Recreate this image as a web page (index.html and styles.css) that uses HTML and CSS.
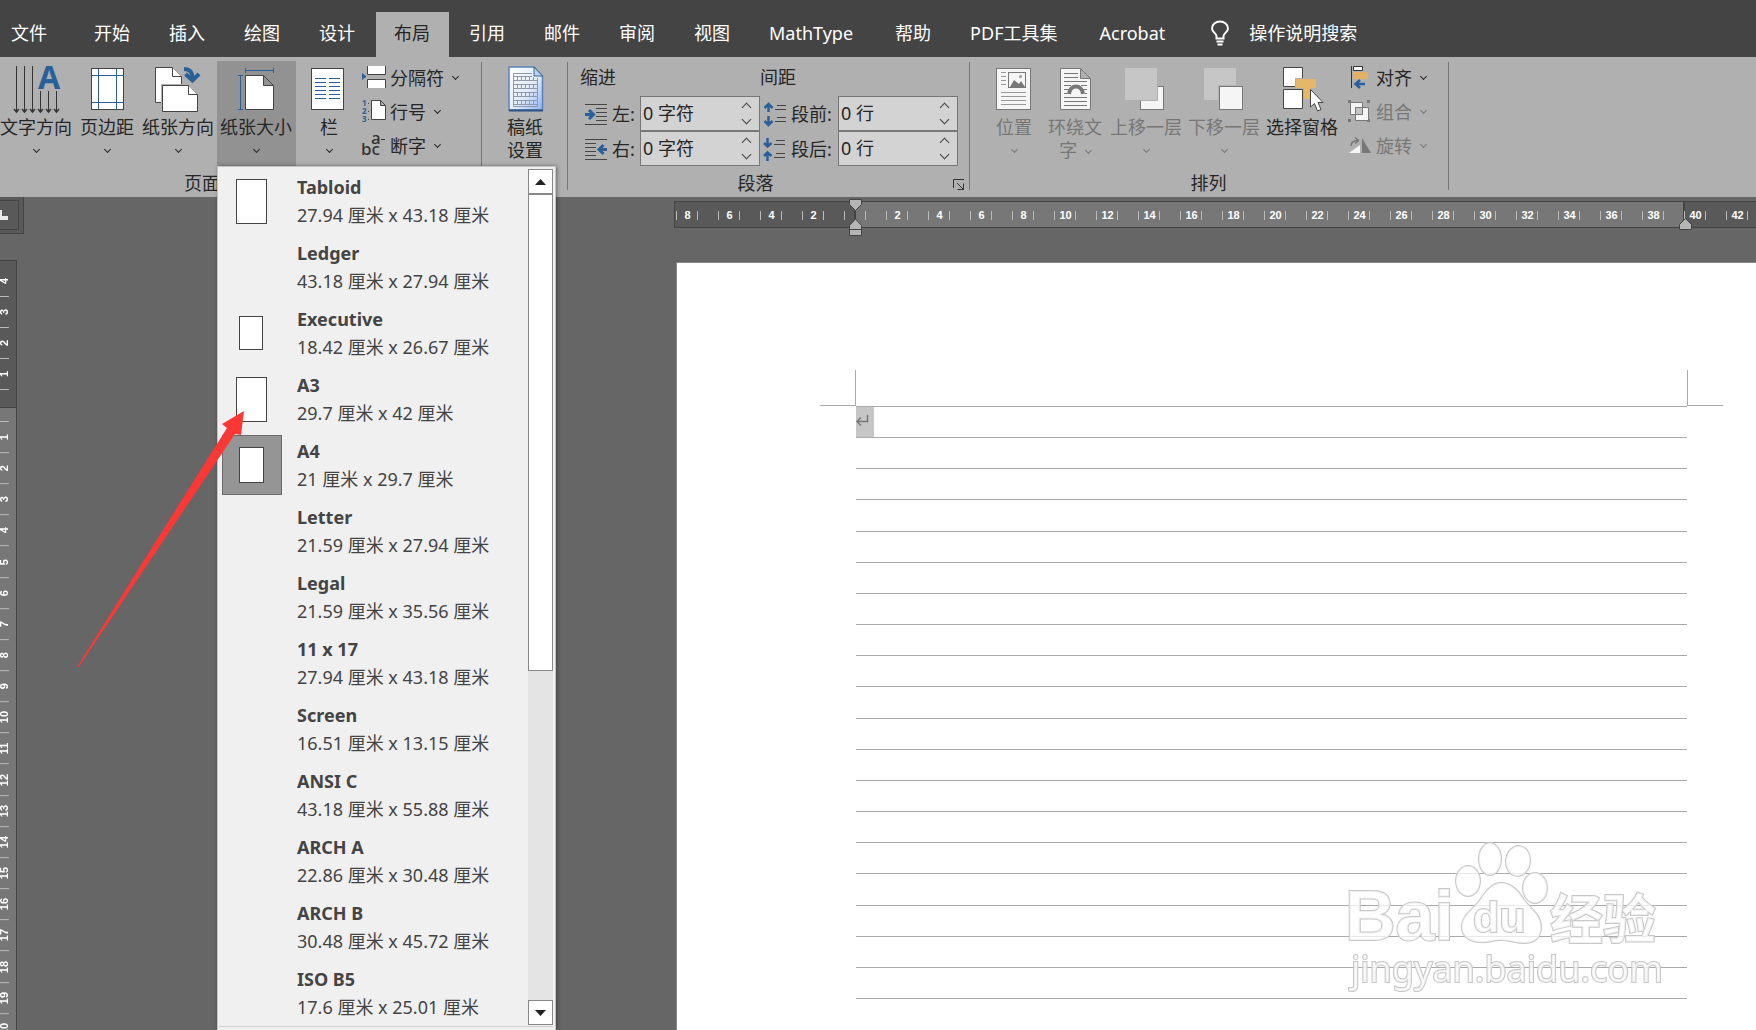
FILE: index.html
```html
<!DOCTYPE html>
<html lang="zh-CN">
<head>
<meta charset="utf-8">
<title>布局</title>
<link rel="stylesheet" href="styles.css">
</head>
<body>
<div class="app">
  <nav class="tabs">
    <button class="tab">文件</button>
    <button class="tab">开始</button>
    <button class="tab">插入</button>
    <button class="tab">绘图</button>
    <button class="tab">设计</button>
    <button class="tab active">布局</button>
    <button class="tab">引用</button>
    <button class="tab">邮件</button>
    <button class="tab">审阅</button>
    <button class="tab">视图</button>
    <button class="tab latin">MathType</button>
    <button class="tab">帮助</button>
    <button class="tab latin">PDF工具集</button>
    <button class="tab latin">Acrobat</button>
    <button class="tab tell">
      <svg width="20" height="26" viewBox="0 0 20 26" fill="none" stroke="#fff" stroke-width="2"><path d="M6.500 18.500V16C6.500 13.500 2 12 2 8.500C2 4.500 5.500 1.500 10 1.500S18 4.500 18 8.500C18 12 13.500 13.500 13.500 16V18.500ZM6.500 21.500H13.500M7.500 24.500H12.500"/></svg>
      <span>操作说明搜索</span>
    </button>
  </nav>

  <div class="ribbon">
    <section class="group setup">
      <div class="tools">
        <button class="big"><svg class="ico" viewBox="0 0 48 48"><g fill="none" stroke="#333"><path d="M4.500 0V46M12.500 0V46M20.500 0V46M28.500 25V46M36.500 25V46M44.500 25V46"/><path stroke-width="1.500" d="M2 43l2.500 3l2.500-3M10 43l2.500 3l2.500-3M18 43l2.500 3l2.500-3M26 43l2.500 3l2.500-3M34 43l2.500 3l2.500-3M42 43l2.500 3l2.500-3"/></g><text class="glyph-a" x="26" y="23">A</text></svg><span>文字方向</span><i class="chev"></i></button>
        <button class="big mid"><svg class="ico" viewBox="0 0 48 48"><rect x="8.500" y="2.500" width="32" height="41" fill="#fff" stroke="#444"/><path stroke="#2a6099" d="M15.500 3V43M33.500 3V43M9 9.500H40M9 36.500H40"/></svg><span>页边距</span><i class="chev"></i></button>
        <button class="big"><svg class="ico" viewBox="0 0 48 48"><g fill="#fff" stroke="#444"><path d="M1.500 1.500H18.500L27.500 10.500V36.500H1.500Z"/><path d="M18.500 1.500V10.500H27.500"/><path stroke="#b0b0b0" stroke-width="3" d="M8.500 19.500H34.500L43.500 28.500V45.500H8.500Z"/><path d="M8.500 19.500H34.500L43.500 28.500V45.500H8.500Z"/><path d="M34.500 19.500V28.500H43.500"/></g><path fill="none" stroke="#2a6099" stroke-width="4" d="M30 3C36 3 38.500 6 38.500 13M31.500 8L38.500 14.500L45 8"/></svg><span>纸张方向</span><i class="chev"></i></button>
        <button class="big pressed"><svg class="ico" viewBox="0 0 48 48"><path fill="#fff" stroke="#444" d="M13.500 9.500H31.500L41.500 19.500V43.500H13.500ZM31.500 9.500V19.500H41.500"/><path stroke="#2a6099" d="M13 4.500H42M13.500 2V7M41.500 2V7M8.500 9V44M6 9.500H11M6 43.500H11"/></svg><span>纸张大小</span><i class="chev"></i></button>
        <button class="big cols"><svg class="ico" viewBox="0 0 48 48"><rect x="6.500" y="2.500" width="32" height="41" fill="#fff" stroke="#444"/><path stroke="#2a6099" d="M10 12.500H21M24 12.500H35M10 16.500H21M24 16.500H35M10 20.500H21M24 20.500H35M10 24.500H21M24 24.500H35M10 28.500H21M24 28.500H35M10 32.500H21M24 32.500H35"/></svg><span>栏</span><i class="chev"></i></button>
        <div class="stack">
          <button class="small"><svg class="sico" viewBox="0 0 24 24"><path fill="#fff" stroke="#444" d="M5.500 0V8.500H23.500V0M5.500 22V13.500H23.500V22"/><path fill="#2a6099" d="M0 7L4.500 10.500L0 14Z"/></svg><span>分隔符</span><i class="chev"></i></button>
          <button class="small"><svg class="sico" viewBox="0 0 24 24"><text class="nums" x="0" y="6">1</text><text class="nums" x="0" y="14">2</text><text class="nums" x="0" y="22">3</text><path stroke="#444" stroke-dasharray="1 7" d="M6.500 3V21"/><path fill="#fff" stroke="#444" d="M9.500 .5H18.500L23.500 5.500V19.500H9.500ZM18.500 .5V5.500H23.500"/></svg><span>行号</span><i class="chev"></i></button>
          <button class="small"><svg class="sico" viewBox="0 0 24 24"><text class="hyph" x="-1" y="21">bc</text><text class="hyph" x="9" y="10">a</text><path stroke="#333" d="M19 5.500H23"/></svg><span>断字</span><i class="chev"></i></button>
        </div>
      </div>
      <footer>页面设置</footer>
    </section>

    <section class="group draft">
      <div class="tools">
        <button class="big"><svg class="ico" viewBox="0 0 48 48"><defs><linearGradient id="paper" x1="0" y1="0" x2="1" y2="1"><stop offset="0" stop-color="#fff"/><stop offset=".55" stop-color="#e3ecfa"/><stop offset="1" stop-color="#8fb4f5"/></linearGradient></defs><path fill="url(#paper)" stroke="#5a83bb" stroke-width="1.500" d="M8 1H33L41.500 10V44H8Z"/><path d="M8 44.500H42" stroke="#2c5284" stroke-width="2"/><path fill="#b9d4f2" stroke="#3e648c" d="M33 1V10H41.500Z"/><g fill="none" stroke="#8e99ad"><path d="M12.500 7.500H31M12.500 7.500V40.500H36.500V12M13 10.500H31M13 14.500H36M13 18.500H36M13 22.500H36M13 26.500H36M13 30.500H36M13 34.500H36M13 38.500H36"/><path stroke-width="3" stroke-dasharray="1 3" d="M16 12.500H36M16 20.500H36M16 28.500H36M16 36.500H36"/></g></svg><span>稿纸<br>设置</span></button>
      </div>
    </section>

    <section class="group para">
      <div class="fields">
        <h3>缩进</h3><h3>间距</h3>
        <div class="field"><svg class="sico" viewBox="0 0 24 24"><path stroke="#444" d="M0 2.500H22M11 6.500H22M11 10.500H22M11 14.500H22M11 18.500H22M0 22.500H22"/><path fill="none" stroke="#2a6099" stroke-width="3" d="M0 12.500H8M4 8L8.500 12.500L4 17"/></svg><label for="il">左:</label><div class="spin"><input id="il" value="0 字符"><button class="up" aria-label="增加"></button><button class="down" aria-label="减少"></button></div></div>
        <div class="field right"><svg class="sico" viewBox="0 0 24 24"><path stroke="#444" d="M13 3.500H22M11 7.500H22M13 15.500H22M11 19.500H22" /><path fill="none" stroke="#2a6099" stroke-width="2.500" d="M4.500 2V10M.5 6L4.500 2L8.500 6M4.500 14V23M.5 19L4.500 23L8.500 19"/></svg><label for="sb">段前:</label><div class="spin"><input id="sb" value="0 行"><button class="up" aria-label="增加"></button><button class="down" aria-label="减少"></button></div></div>
        <div class="field"><svg class="sico" viewBox="0 0 24 24"><path stroke="#444" d="M0 2.500H22M0 6.500H11M0 10.500H11M0 14.500H11M0 18.500H11M0 22.500H22"/><path fill="none" stroke="#2a6099" stroke-width="3" d="M22 12.500H15M18.500 8L14 12.500L18.500 17"/></svg><label for="ir">右:</label><div class="spin"><input id="ir" value="0 字符"><button class="up" aria-label="增加"></button><button class="down" aria-label="减少"></button></div></div>
        <div class="field right"><svg class="sico" viewBox="0 0 24 24"><path stroke="#444" d="M12 3.500H21M10 7.500H21M12 16.500H21M10 20.500H21"/><path fill="none" stroke="#2a6099" stroke-width="2.500" d="M3.500 1V9M0 6L3.500 9.500L7.500 6M3.500 24V16M0 19L3.500 15.500L7.500 19"/></svg><label for="sa">段后:</label><div class="spin"><input id="sa" value="0 行"><button class="up" aria-label="增加"></button><button class="down" aria-label="减少"></button></div></div>
      </div>
      <footer>段落<button class="launch" aria-label="段落设置"><svg width="12" height="12" viewBox="0 0 12 12" fill="none" stroke="#333"><path d="M.5 9V.5H11M4 4L10.500 10.500M10.500 4.500V10.500H4.500"/></svg></button></footer>
    </section>

    <section class="group arrange">
      <div class="tools">
        <button class="big pos" disabled><svg class="ico" viewBox="0 0 48 48"><rect x="6.500" y="2.500" width="34" height="41" fill="#f5f5f5" stroke="#777"/><path stroke="#999" d="M11 6.500H16M11 10.500H16M11 14.500H16M11 18.500H16M11 26.500H36M11 30.500H36M11 34.500H36M11 38.500H36"/><rect x="18.500" y="6.500" width="17" height="15" fill="#f5f5f5" stroke="#777"/><path fill="#777" d="M20 21L24 14L29 18L31 15L35 21Z"/><circle cx="30.500" cy="10.500" r="1.500" fill="#999"/></svg><span>位置</span><i class="chev"></i></button>
        <button class="big mid" disabled><svg class="ico" viewBox="0 0 48 48"><path fill="#f5f5f5" stroke="#777" d="M9.500 2.500H29.500L39.500 12.500V43.500H9.500ZM29.500 2.500V12.500H39.500"/><path stroke="#777" d="M13 7.500H27M13 11.500H27M13 15.500H36M13 19.500H20M30 19.500H36M13 23.500H18M32 23.500H36M13 27.500H16M34 27.500H36M13 31.500H36M13 35.500H36M13 39.500H36"/><path fill="none" stroke="#777" stroke-width="4" d="M18 28C19 18 31 18 32 28"/></svg><span>环绕文<br>字 <i class="chev inline"></i></span></button>
        <button class="big" disabled><svg class="ico" viewBox="0 0 48 48"><rect x="18.500" y="20.500" width="23" height="23" fill="#f5f5f5" stroke="#777"/><path fill="#c6c6c6" stroke="#b0b0b0" d="M2.500 1.500H35.500V34.500H2.500Z"/></svg><span>上移一层</span><i class="chev"></i></button>
        <button class="big spaced" disabled><svg class="ico" viewBox="0 0 48 48"><path fill="#c6c6c6" d="M4 2H36V34H4Z"/><path fill="#b0b0b0" d="M18 19H44V45H18Z"/><rect x="19.500" y="20.500" width="23" height="23" fill="#f5f5f5" stroke="#777"/></svg><span>下移一层</span><i class="chev"></i></button>
        <button class="big spaced"><svg class="ico" viewBox="0 0 48 48"><path fill="#fff" stroke="#444" d="M5.500 1.500H24.500V20.500H5.500ZM5.500 23.500H24.500V42.500H5.500Z"/><path fill="#b0b0b0" d="M17 12H38V22H17Z"/><path fill="#e5b869" d="M18 13H38V22H33V33H26V22H18Z"/><path fill="#fff" stroke="#444" d="M32.500 23.500V41L36.500 37.500L39.500 45L43 43.500L40 36.500H45Z"/></svg><span>选择窗格</span></button>
        <div class="stack">
          <button class="small"><svg class="sico" viewBox="0 0 24 24"><path stroke="#333" d="M3.500 0V22"/><path fill="#fff" stroke="#333" d="M5.500 .5H14.500V4.500H5.500Z"/><path fill="#e3b064" d="M5 6H20V13H5Z"/><path fill="none" stroke="#2a6099" stroke-width="2.500" d="M7 18H17M12 14L7.500 18L12 22"/></svg><span>对齐</span><i class="chev"></i></button>
          <button class="small" disabled><svg class="sico" viewBox="0 0 24 24"><path fill="#777" d="M0 0H3V3H0ZM19 0H22V3H19ZM0 19H3V22H0ZM19 19H22V22H19Z"/><path fill="#f5f5f5" stroke="#777" d="M2.500 2.500H14.500V14.500H2.500ZM7.500 7.500H20.500V20.500H7.500Z"/><path fill="#c6c6c6" stroke="#777" d="M7.500 7.500H14.500V14.500H7.500Z"/></svg><span>组合</span><i class="chev"></i></button>
          <button class="small" disabled><svg class="sico" viewBox="0 0 24 24"><path fill="#f5f5f5" d="M1 19L12 11V19Z"/><path fill="#777" d="M14 4V19H23Z"/><path fill="none" stroke="#777" stroke-width="1.500" d="M3 12C3 8 6 6.500 10 6.500M7 3.500L10.500 6.500L7 9.500"/></svg><span>旋转</span><i class="chev"></i></button>
        </div>
      </div>
      <footer>排列</footer>
    </section>
  </div>

  <main class="workspace">
    <div class="side">
      <button class="corner" aria-label="制表符"><span><svg width="9" height="11" viewBox="0 0 9 11"><path fill="#e6e6e6" d="M0 0H2V6H8V10H0Z"/></svg></span></button>
      <div class="vruler">
        <ol class="vneg"><li>4</li><li>3</li><li>2</li><li>1</li></ol>
        <div class="vzero"></div>
        <ol class="vpos"><li>1</li><li>2</li><li>3</li><li>4</li><li>5</li><li>6</li><li>7</li><li>8</li><li>9</li><li>10</li><li>11</li><li>12</li><li>13</li><li>14</li><li>15</li><li>16</li><li>17</li><li>18</li><li>19</li><li>20</li></ol>
      </div>
    </div>
    <div class="document">
      <div class="hruler">
        <ol><li>8</li><li>6</li><li>4</li><li>2</li><li></li><li>2</li><li>4</li><li>6</li><li>8</li><li>10</li><li>12</li><li>14</li><li>16</li><li>18</li><li>20</li><li>22</li><li>24</li><li>26</li><li>28</li><li>30</li><li>32</li><li>34</li><li>36</li><li>38</li><li>40</li><li>42</li></ol>
        <svg class="mark first" width="14" height="38" viewBox="0 0 14 38"><path fill="#b5b5b5" stroke="#444" d="M.5 .5H12.500V5.500L6.500 11.500L.5 5.500ZM.5 26.500L6.500 20L12.500 26.500V36.500H.5ZM.5 30.500H12.500"/><path stroke="#444" stroke-width="2" d="M6 12V20"/></svg>
        <svg class="mark last" width="14" height="13" viewBox="0 0 14 13"><path fill="#b5b5b5" stroke="#444" d="M.5 6.500L6.500 .5L12.500 6.500V11.500H.5Z"/></svg>
      </div>
      <article class="page">
        <div class="crops"><i class="crop-l"></i><i class="crop-r"></i></div>
        <div class="lines">
          <p><svg width="18" height="30" viewBox="0 0 18 30" fill="none" stroke="#777" stroke-width="1.500"><path d="M11.500 8V14.500H1.500M5 10.500L1 14.500L5 18.500"/></svg></p>
          <p></p><p></p><p></p><p></p><p></p><p></p><p></p><p></p><p></p><p></p><p></p><p></p><p></p><p></p><p></p><p></p><p></p><p></p>
        </div>
      </article>
    </div>
  </main>

  <div class="menu">
    <div class="scroller">
      <ul>
        <li><span class="thumb"><i class="sheet large"></i></span><button><b>Tabloid</b><span>27.94 厘米 x 43.18 厘米</span></button></li>
        <li><span class="thumb"></span><button><b>Ledger</b><span>43.18 厘米 x 27.94 厘米</span></button></li>
        <li><span class="thumb"><i class="sheet exec"></i></span><button><b>Executive</b><span>18.42 厘米 x 26.67 厘米</span></button></li>
        <li><span class="thumb"><i class="sheet large"></i></span><button><b>A3</b><span>29.7 厘米 x 42 厘米</span></button></li>
        <li><span class="thumb selected"><i class="sheet a4"></i></span><button><b>A4</b><span>21 厘米 x 29.7 厘米</span></button></li>
        <li><span class="thumb"></span><button><b>Letter</b><span>21.59 厘米 x 27.94 厘米</span></button></li>
        <li><span class="thumb"></span><button><b>Legal</b><span>21.59 厘米 x 35.56 厘米</span></button></li>
        <li><span class="thumb"></span><button><b>11 x 17</b><span>27.94 厘米 x 43.18 厘米</span></button></li>
        <li><span class="thumb"></span><button><b>Screen</b><span>16.51 厘米 x 13.15 厘米</span></button></li>
        <li><span class="thumb"></span><button><b>ANSI C</b><span>43.18 厘米 x 55.88 厘米</span></button></li>
        <li><span class="thumb"></span><button><b>ARCH A</b><span>22.86 厘米 x 30.48 厘米</span></button></li>
        <li><span class="thumb"></span><button><b>ARCH B</b><span>30.48 厘米 x 45.72 厘米</span></button></li>
        <li><span class="thumb"></span><button><b>ISO B5</b><span>17.6 厘米 x 25.01 厘米</span></button></li>
      </ul>
      <div class="bar">
        <button aria-label="向上"><svg width="11" height="6" viewBox="0 0 11 6"><path fill="#222" d="M0 6L5.500 0L11 6Z"/></svg></button>
        <div class="grip"></div>
        <div class="track"></div>
        <button aria-label="向下"><svg width="11" height="6" viewBox="0 0 11 6"><path fill="#222" d="M0 0L5.500 6L11 0Z"/></svg></button>
      </div>
    </div>
  </div>

  <svg class="arrow" width="170" height="260" viewBox="0 0 170 260"><path fill="#fc3836" d="M169 1L147 14L152 18L3 255.500L3 257L4 256.500L160 24L166 25Z"/></svg>

  <svg class="watermark" width="330" height="160" viewBox="0 0 330 160">
    <defs><filter id="soft" x="-5%" y="-5%" width="110%" height="110%"><feGaussianBlur stdDeviation="0.7"/></filter></defs>
    <g class="wm-halo" filter="url(#soft)">
      <text class="wm-bai" x="5" y="100">Bai</text>
      <text class="wm-cn" x="210" y="99">经验</text>
      <text class="wm-url" x="11" y="142">jingyan.baidu.com</text>
      <ellipse cx="128" cy="41" rx="12" ry="15"/><ellipse cx="150" cy="19" rx="11" ry="16"/><ellipse cx="178" cy="21" rx="12" ry="15" transform="rotate(8 178 21)"/><ellipse cx="195" cy="48" rx="12" ry="15"/>
      <path d="M161 43C172 43 178 51 184 60C191 69 201 75 201 87C201 98 194 103 184 103C175 103 170 100 161 100C152 100 148 103 139 102C127 101 121 94 122 85C123 74 134 69 140 60C146 51 152 43 161 43Z"/>
      <text class="wm-du" x="133" y="92">du</text>
    </g>
  </svg>
</div>
</body>
</html>
```
FILE: styles.css
```css
* { box-sizing: border-box; }
body { margin: 0; }
body, button, input {
  font-family: "Noto Sans", "Noto Sans CJK SC", sans-serif;
  font-size: 18px;
  color: #262626;
}
button { border: 0; padding: 0; background: none; }
ol, ul { list-style: none; margin: 0; padding: 0; }
svg { display: block; flex: none; overflow: visible; }
.app {
  position: relative;
  display: flex;
  flex-direction: column;
  height: 100vh;
  overflow: hidden;
  background: #666;
}

/* tab strip */
.tabs {
  display: flex;
  gap: 2px;
  height: 57px;
  padding-top: 12px;
  background: #444;
  flex: none;
}
.tab {
  padding: 0 19px 4px 18px;
  color: #fff;
  white-space: nowrap;
  line-height: 32px;
}
.tab:first-child { padding-left: 11px; margin-right: 8px; }
.tab.active { background: #b0b0b0; color: #262626; }
.tab.latin { padding-right: 22px; }
.tell { display: flex; align-items: center; gap: 19px; padding-left: 21px; }

/* ribbon */
.ribbon { display: flex; flex: none; height: 140px; background: #b0b0b0; }
.group {
  position: relative;
  display: flex;
  flex-direction: column;
  padding-top: 4px;
  flex: none;
}
.group::after {
  content: "";
  position: absolute;
  right: 0;
  top: 5px;
  bottom: 7px;
  width: 1px;
  background: #777;
}
.tools { display: flex; flex: none; height: 105px; }
.group footer {
  position: relative;
  line-height: 34px;
  text-align: center;
}
.setup { width: 482px; }
.setup footer { padding-right: 42px; }
.draft { width: 86px; }
.draft .tools { justify-content: center; }
.para { width: 402px; padding-left: 12px; padding-right: 11px; }
.para footer { padding-right: 28px; }
.arrange { width: 479px; }
.arrange .tools { padding-left: 18px; }
.arrange footer { padding-right: 2px; }

.big {
  display: flex;
  flex-direction: column;
  align-items: center;
  width: 72px;
  padding-top: 5px;
  line-height: 23px;
  white-space: nowrap;
  flex: none;
}
.big.mid { width: 70px; }
.big.pos { width: 52px; }
.big.cols { width: 66px; }
.big.pressed { width: 79px; margin-left: 3px; padding-right: 1px; background: #929292; }
.big.spaced { margin-left: 6px; }
button:disabled { color: #777; }
.ico { width: 48px; height: 48px; margin-bottom: 2px; }
.glyph-a { font-weight: 700; font-size: 32px; fill: #2a6099; }
.nums { font-weight: 700; font-size: 8px; fill: #2a6099; }
.hyph { font-size: 17px; fill: #333; font-weight: 500; }
.chev {
  display: block;
  width: 5px;
  height: 5px;
  border: solid currentColor;
  border-width: 0 1px 1px 0;
  transform: rotate(45deg);
}
.big > .chev { margin-top: 8px; }
.chev.inline { display: inline-block; margin: 0 0 4px 4px; }
.stack { display: flex; flex-direction: column; }
.arrange .stack { margin-left: 10px; }
.small {
  display: flex;
  align-items: center;
  gap: 4px;
  height: 34px;
  white-space: nowrap;
}
.small span { padding-bottom: 2px; }
.sico { width: 24px; height: 24px; }
.small .chev { margin: 0 0 4px 5px; }

.fields {
  display: grid;
  grid-template-columns: 180px 198px;
  grid-template-rows: 35px 35px 35px;
  height: 105px;
  flex: none;
}
.fields h3 { margin: 0; font-size: 18px; font-weight: 400; line-height: 32px; }
.field { display: flex; align-items: center; padding-left: 5px; }
.field.right { padding-left: 4px; }
.field label { flex: 1; padding: 0 0 2px 3px; white-space: nowrap; }
.spin {
  display: grid;
  grid-template-columns: 1fr 26px;
  grid-template-rows: 1fr 1fr;
  width: 120px;
  height: 35px;
  border: 1px solid #777;
  background: #d3d3d3;
}
.spin input {
  grid-row: 1 / 3;
  width: 100%;
  min-width: 0;
  border: 0;
  padding: 0 2px 3px;
  background: none;
}
.spin button { display: flex; justify-content: center; align-items: center; }
.spin button::after {
  content: "";
  width: 6px;
  height: 6px;
  border: solid #444;
  border-width: 1px 0 0 1px;
  transform: rotate(45deg);
}
.spin .up { padding-top: 4px; }
.spin .down { padding-bottom: 4px; }
.spin .down::after { transform: rotate(225deg); }
.launch { position: absolute; right: -6px; top: 13px; }

/* workspace */
.workspace { display: flex; flex: 1; min-height: 0; }
.side { width: 24px; flex: none; }
.corner {
  display: block;
  width: 24px;
  height: 37px;
  padding: 3px 4px 3px 0;
  background: #595959;
  border: solid #444;
  border-width: 0 1px 1px 0;
}
.corner span {
  display: flex;
  align-items: center;
  height: 30px;
  border: solid #444;
  border-width: 1px 1px 1px 0;
}
.vruler {
  width: 17px;
  margin-top: 26px;
  border: solid #444;
  border-width: 1px 1px 0 0;
  background: #777;
}
.vruler li {
  width: 9px;
  border-top: 1px solid #bbb;
  color: #fff;
  font: bold 11px/9px "Liberation Sans", sans-serif;
  text-align: center;
  writing-mode: vertical-rl;
  transform: rotate(180deg);
}
.vneg { padding-top: 5px; height: 147px; background: #595959; border-bottom: 1px solid #444; }
.vneg li { height: 31px; }
.vzero { width: 9px; height: 14px; border-bottom: 1px solid #bbb; }
.vpos { display: grid; grid-auto-rows: 1fr; height: 623px; }

.document { flex: 1; min-width: 0; padding: 4px 0 0 650px; display: flex; flex-direction: column; }
.hruler {
  position: relative;
  flex: none;
  height: 27px;
  padding-left: 1px;
  border: solid #444;
  border-width: 1px 0 1px 1px;
  background: linear-gradient(90deg, #595959 181px, #777 181px 1008px, #444 1008px 1010px, #595959 1010px);
}
.hruler ol { display: flex; width: 100%; overflow: hidden; }
.hruler li {
  flex: none;
  width: 42px;
  height: 9px;
  margin-top: 9px;
  padding-right: 20px;
  border-left: 1px solid #bbb;
  background: linear-gradient(#bbb, #bbb) 20px 0 / 1px 9px no-repeat;
  color: #fff;
  font: bold 11px/9px "Liberation Sans", sans-serif;
  text-align: center;
}
.mark { position: absolute; }
.mark.first { left: 174px; top: -3px; }
.mark.last { left: 1004px; top: 16px; }
.page {
  flex: 1;
  min-height: 0;
  margin: 34px 0 0 2px;
  padding: 107px 33px 0 143px;
  border: solid #888;
  border-width: 1px 0 0 1px;
  background: #fff;
}
.crops { display: flex; justify-content: space-between; height: 36px; }
.crops i { width: 36px; border-bottom: 1px solid #aaa; }
.crop-l { border-right: 1px solid #aaa; }
.crop-r { border-left: 1px solid #aaa; }
.lines {
  display: grid;
  grid-auto-rows: 1fr;
  height: 593px;
  margin: 0 36px;
  border-top: 1px solid #aaa;
}
.lines p { margin: 0; border-bottom: 1px solid #aaa; }
.lines svg { background: #c6c6c6; }

/* paper size menu */
.menu {
  position: absolute;
  left: 217px;
  top: 166px;
  bottom: 0;
  width: 339px;
  padding: 2px 2px 0 1px;
  background: #f0f0f0;
  border: 1px solid #c4c4c4;
  border-width: 1px 1px 0;
  box-shadow: 1px 0 4px #0006;
}
.scroller { display: flex; margin-top: -1px; border-bottom: 1px solid #d0d0d0; }
.menu ul { flex: 1; }
.menu li { display: flex; height: 66px; align-items: center; padding-left: 3px; }
.menu li button { flex: 1; padding-left: 15px; text-align: left; line-height: 28px; color: #444; }
.menu b, .menu li button span { display: block; }
.thumb {
  display: flex;
  align-items: center;
  justify-content: center;
  width: 60px;
  height: 60px;
  padding-right: 2px;
}
.thumb.selected { background: #959595; border: 1px solid #6a6a6a; }
.sheet { border: 1px solid #444; background: #fff; }
.sheet.large { width: 31px; height: 45px; }
.sheet.exec { width: 24px; height: 34px; }
.sheet.a4 { width: 25px; height: 36px; }
.bar { display: flex; flex-direction: column; width: 25px; margin: 1px 0; background: #e4e4e4; }
.bar button, .grip { border: 1px solid #888; background: #fff; }
.bar button { display: flex; justify-content: center; align-items: center; height: 25px; }
.grip { flex: 476; }
.track { flex: 330; }

.arrow { position: absolute; left: 75px; top: 410px; }

.watermark { position: absolute; left: 1340px; top: 840px; }
.wm-halo {
  fill: #fffb;
  stroke: #c8c8c8;
  stroke-width: 2px;
  paint-order: stroke;
  font-family: "Liberation Sans", "Noto Sans CJK SC", sans-serif;
}
.wm-halo text { font-weight: 700; }
.wm-bai { font-size: 70px; }
.wm-cn { font-size: 53px; }
.wm-du { font-size: 43px; }
.wm-halo .wm-url { font-family: "Noto Sans", sans-serif; font-size: 36px; font-weight: 400; }
```
